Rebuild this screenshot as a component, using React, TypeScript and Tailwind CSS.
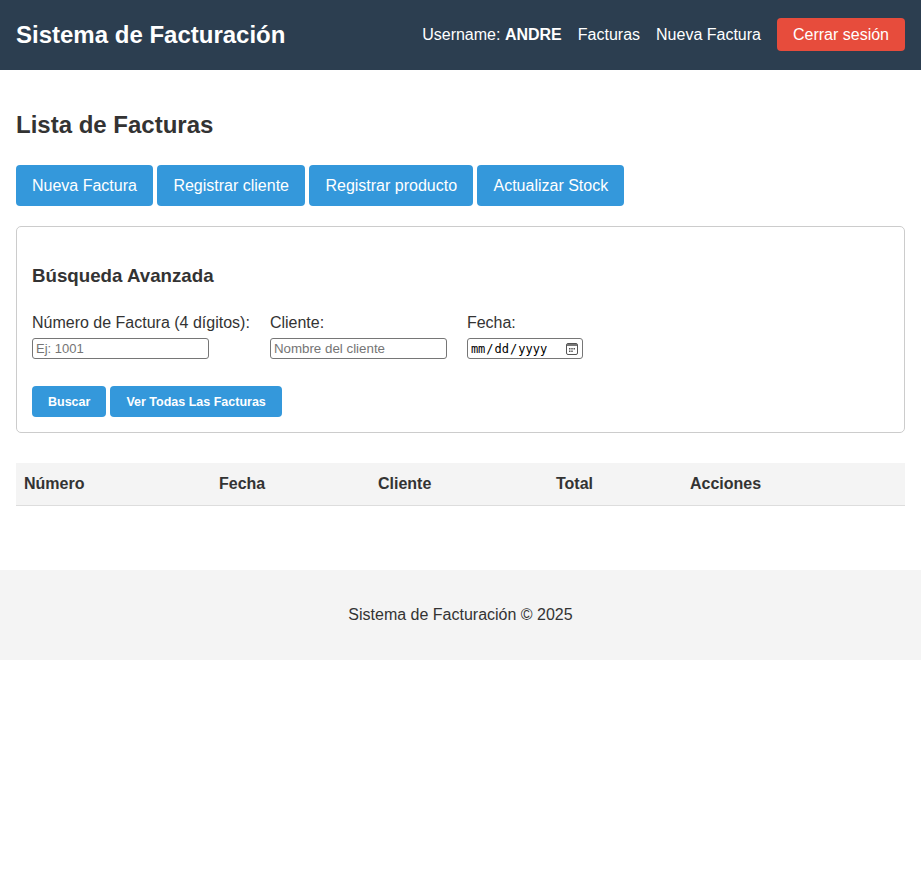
export default function App() {
  return (
    <div className="font-['Liberation_Sans',Arial,sans-serif] text-[#333] text-base leading-[normal] bg-white min-h-[882px]">
      {/* Header */}
      <header className="bg-[#2c3e50] h-[70px] px-4 flex items-center justify-between text-white">
        <div className="text-2xl font-bold">Sistema de Facturación</div>
        <nav className="flex items-center gap-4">
          <span>
            Username: <strong>ANDRE</strong>
          </span>
          <a href="#">Facturas</a>
          <a href="#">Nueva Factura</a>
          <button className="bg-[#e74c3c] text-white text-base px-4 h-[33px] mb-px rounded">Cerrar sesión</button>
        </nav>
      </header>

      <main className="px-4 pt-[41px] pb-16">
        <h1 className="text-2xl font-bold leading-[28px]">Lista de Facturas</h1>

        <div className="flex gap-[4.45px] mt-[26px]">
          <a href="#" className="bg-[#3498db] text-white px-4 h-[41px] flex items-center rounded">Nueva Factura</a>
          <a href="#" className="bg-[#3498db] text-white px-4 h-[41px] flex items-center rounded">Registrar cliente</a>
          <a href="#" className="bg-[#3498db] text-white px-4 h-[41px] flex items-center rounded">Registrar producto</a>
          <a href="#" className="bg-[#3498db] text-white px-4 h-[41px] flex items-center rounded">Actualizar Stock</a>
        </div>

        {/* Busqueda */}
        <section className="mt-5 border border-[#ccc] rounded-[5px] px-[15px] pt-[38px] pb-[15px]">
          <h2 className="text-[18.72px] font-bold leading-[21px]">Búsqueda Avanzada</h2>
          <div className="flex gap-5 mt-[27px]">
            <div className="flex flex-col items-start">
              <label className="mb-[6px] pt-px">Número de Factura (4 dígitos):</label>
              <input
                type="text"
                placeholder="Ej: 1001"
                className="w-[177px] h-[21px] border border-[#767676] rounded-[3px] px-[3px] text-[13px] placeholder:text-[#757575]"
              />
            </div>
            <div className="flex flex-col items-start">
              <label className="mb-[6px] pt-px">Cliente:</label>
              <input
                type="text"
                placeholder="Nombre del cliente"
                className="w-[177px] h-[21px] border border-[#767676] rounded-[3px] px-[3px] text-[13.33px] placeholder:text-[#757575]"
              />
            </div>
            <div className="flex flex-col items-start">
              <label className="mb-[6px] pt-px">Fecha:</label>
              <div className="relative">
                <input
                  type="date"
                  className="block w-[116px] h-[21px] border border-[#767676] rounded-[3px] px-[2px] text-[12px] text-black font-['DejaVu_Sans_Mono',monospace] [&::-webkit-calendar-picker-indicator]:opacity-0"
                />
                <svg className="absolute right-[5px] top-[5px] pointer-events-none" width="12" height="12" viewBox="0 0 12 12" fill="none">
                  <rect x="0.5" y="0.5" width="11" height="11" rx="1.5" stroke="#555" />
                  <rect x="1" y="1" width="10" height="2" fill="#777" />
                  <rect x="3" y="5" width="1.5" height="1.5" fill="#555" />
                  <rect x="5.25" y="5" width="1.5" height="1.5" fill="#555" />
                  <rect x="7.5" y="5" width="1.5" height="1.5" fill="#555" />
                  <rect x="3" y="7.5" width="1.5" height="1.5" fill="#555" />
                  <rect x="5.25" y="7.5" width="1.5" height="1.5" fill="#555" />
                </svg>
              </div>
            </div>
          </div>
          <div className="flex gap-1 mt-[27px]">
            <button className="bg-[#3498db] text-white text-[12.5px] font-bold px-4 h-[31px] rounded">Buscar</button>
            <button className="bg-[#3498db] text-white text-[12.5px] font-bold px-4 h-[31px] rounded">Ver Todas Las Facturas</button>
          </div>
        </section>

        {/* Tabla */}
        <table className="w-full mt-[30px] border-collapse text-left">
          <thead>
            <tr className="bg-[#f4f4f4] border-b border-[#ddd]">
              <th className="w-[195px] px-2 py-3 font-bold">Número</th>
              <th className="w-[159px] px-2 py-3 font-bold">Fecha</th>
              <th className="w-[178px] px-2 py-3 font-bold">Cliente</th>
              <th className="w-[134px] px-2 py-3 font-bold">Total</th>
              <th className="px-2 py-3 font-bold">Acciones</th>
            </tr>
          </thead>
          <tbody />
        </table>
      </main>

      <footer className="bg-[#f4f4f4] h-[90px] flex items-center justify-center">
        Sistema de Facturación © 2025
      </footer>
    </div>
  )
}
